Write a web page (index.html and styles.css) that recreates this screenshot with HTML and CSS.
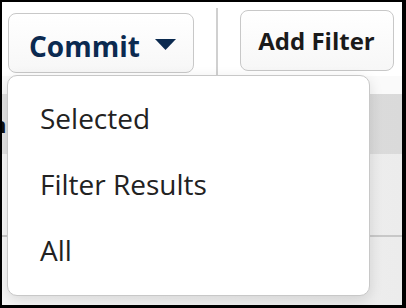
FILE: index.html
```html
<!DOCTYPE html>
<html lang="en">
<head>
    <meta charset="UTF-8">
    <meta name="viewport" content="width=device-width, initial-scale=1.0">
    <title>Commit Menu</title>
    <link rel="stylesheet" href="styles.css">
</head>
<body>
    <div class="frame">
        <div class="toolbar">
            <button class="btn btn-commit">
                <span>Commit</span>
                <svg class="caret" width="21" height="11" viewBox="0 0 21 11"><path d="M0 0 H21 L10.5 11 Z" fill="#0b2a50"/></svg>
            </button>
            <div class="divider"></div>
            <button class="btn btn-filter">Add Filter</button>
        </div>

        <div class="table">
            <div class="row row-top"></div>
            <div class="row row-selected"><span class="cell">n</span></div>
            <div class="row row-plain"></div>
            <div class="row row-last"></div>
        </div>

        <!-- dropdown opened from the Commit button -->
        <ul class="menu">
            <li>Selected</li>
            <li>Filter Results</li>
            <li>All</li>
        </ul>
    </div>
</body>
</html>
```

FILE: styles.css
```css
body {
    margin: 0;
    background: #000;
    font-family: "Open Sans", Arial, sans-serif;
}

.frame {
    position: relative;
    margin: 2px 4px 0 2px;
    height: 303px;
    background: #fff;
    overflow: hidden;
}

.toolbar {
    display: flex;
    align-items: flex-start;
    height: 74px;
}

.btn {
    font-family: "Open Sans", Arial, sans-serif;
    font-weight: 700;
    background: linear-gradient(#ffffff, #f7f7f7);
    border: 1.5px solid #c8c8c8;
    border-radius: 8px;
    cursor: pointer;
    padding: 0;
}

.btn-commit {
    display: flex;
    align-items: center;
    gap: 15px;
    margin: 11px 0 0 6px;
    width: 186px;
    height: 60px;
    padding: 5px 0 0 20px;
    font-size: 28px;
    color: #0b2a50;
}

.caret {
    margin-top: -3px;
}

.divider {
    width: 1.5px;
    height: 67px;
    margin: 6px 22px 0 22px;
    background: #d0d0d0;
}

.btn-filter {
    margin-top: 8px;
    width: 154px;
    height: 61px;
    font-size: 24px;
    color: #1a1a1a;
}

.row {
    border-bottom: 1px solid transparent;
}

.row-top {
    height: 17px;
    background: #fafafa;
}

.row-selected {
    height: 59px;
    background: linear-gradient(90deg, #e2e2e2, #dadada);
    display: flex;
    align-items: center;
}

.cell {
    margin-left: -10px;
    font-size: 22px;
    font-weight: 700;
    color: #111;
}

.row-plain {
    height: 81px;
    background: linear-gradient(90deg, #f7f7f7, #ececec);
    border-bottom: 2px solid #c8c8c8;
}

.row-last {
    height: 80px;
    background: linear-gradient(90deg, #f7f7f7, #ececec);
}

.menu {
    position: absolute;
    left: 5px;
    top: 73px;
    width: 361px;
    margin: 0;
    padding: 9px 0 12px 0;
    list-style: none;
    background: #fff;
    border: 1.5px solid #c8c8c8;
    border-radius: 10px;
    box-shadow: 0 4px 14px rgba(0, 0, 0, 0.12);
}

.menu li {
    height: 66px;
    line-height: 66px;
    padding-left: 32px;
    font-size: 28px;
    color: #222;
}
```
